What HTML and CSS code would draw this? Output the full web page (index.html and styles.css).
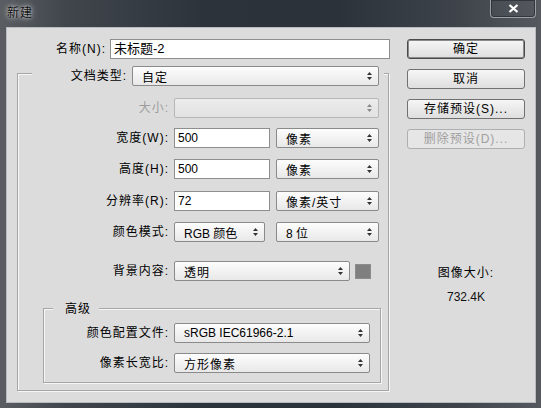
FILE: index.html
```html
<!DOCTYPE html>
<html lang="zh-CN">
<head>
<meta charset="utf-8">
<title>新建</title>
<link rel="stylesheet" href="styles.css">
</head>
<body>
<div class="window">
  <div class="titlebar">
    <span class="title">新建</span>
    <div class="close">
      <svg width="11" height="9" viewBox="0 0 11 9"><path d="M1.5 1 L9.5 8 M9.5 1 L1.5 8" stroke="#fff" stroke-width="2.2" fill="none"/></svg>
    </div>
  </div>
  <div class="content">
    <div class="left">
      <div class="row">
        <span class="lbl name-lbl">名称(N):</span>
        <div class="input name-input">未标题-2</div>
      </div>
      <div class="group outer">
        <div class="group-head doc-head">
          <span class="lbl doc-lbl">文档类型:</span>
          <div class="select doc-select"><span class="cjk">自定</span><svg class="arr" width="7" height="10" viewBox="0 0 7 10"><path d="M1 4 L3.5 1 L6 4 Z M1 6 L3.5 9 L6 6 Z"/></svg></div>
        </div>
        <div class="row r-size">
          <span class="lbl l150 off">大小:</span>
          <div class="select disabled w205"><span></span><svg class="arr" width="7" height="10" viewBox="0 0 7 10"><path d="M1 4 L3.5 1 L6 4 Z M1 6 L3.5 9 L6 6 Z"/></svg></div>
        </div>
        <div class="row r-w">
          <span class="lbl l150">宽度(W):</span>
          <div class="input w96">500</div>
          <div class="select w103 ml6"><span class="cjk">像素</span><svg class="arr" width="7" height="10" viewBox="0 0 7 10"><path d="M1 4 L3.5 1 L6 4 Z M1 6 L3.5 9 L6 6 Z"/></svg></div>
        </div>
        <div class="row r-h">
          <span class="lbl l150">高度(H):</span>
          <div class="input w96">500</div>
          <div class="select w103 ml6"><span class="cjk">像素</span><svg class="arr" width="7" height="10" viewBox="0 0 7 10"><path d="M1 4 L3.5 1 L6 4 Z M1 6 L3.5 9 L6 6 Z"/></svg></div>
        </div>
        <div class="row r-r">
          <span class="lbl l150">分辨率(R):</span>
          <div class="input w96">72</div>
          <div class="select w103 ml6"><span class="cjk">像素/英寸</span><svg class="arr" width="7" height="10" viewBox="0 0 7 10"><path d="M1 4 L3.5 1 L6 4 Z M1 6 L3.5 9 L6 6 Z"/></svg></div>
        </div>
        <div class="row r-c">
          <span class="lbl l150">颜色模式:</span>
          <div class="select w91"><span>RGB 颜色</span><svg class="arr" width="7" height="10" viewBox="0 0 7 10"><path d="M1 4 L3.5 1 L6 4 Z M1 6 L3.5 9 L6 6 Z"/></svg></div>
          <div class="select w103 ml11"><span>8 位</span><svg class="arr" width="7" height="10" viewBox="0 0 7 10"><path d="M1 4 L3.5 1 L6 4 Z M1 6 L3.5 9 L6 6 Z"/></svg></div>
        </div>
        <div class="row r-bg">
          <span class="lbl l150">背景内容:</span>
          <div class="select w176"><span class="cjk">透明</span><svg class="arr" width="7" height="10" viewBox="0 0 7 10"><path d="M1 4 L3.5 1 L6 4 Z M1 6 L3.5 9 L6 6 Z"/></svg></div>
          <div class="swatch"></div>
        </div>
        <div class="group inner">
          <div class="inner-head">高级</div>
          <div class="row r-p">
            <span class="lbl l124">颜色配置文件:</span>
            <div class="select w196"><span>sRGB IEC61966-2.1</span><svg class="arr" width="7" height="10" viewBox="0 0 7 10"><path d="M1 4 L3.5 1 L6 4 Z M1 6 L3.5 9 L6 6 Z"/></svg></div>
          </div>
          <div class="row r-a">
            <span class="lbl l124">像素长宽比:</span>
            <div class="select w196"><span class="cjk">方形像素</span><svg class="arr" width="7" height="10" viewBox="0 0 7 10"><path d="M1 4 L3.5 1 L6 4 Z M1 6 L3.5 9 L6 6 Z"/></svg></div>
          </div>
        </div>
      </div>
    </div>
    <div class="right">
      <div class="btn default">确定</div>
      <div class="btn">取消</div>
      <div class="btn">存储预设(S)...</div>
      <div class="btn disabled">删除预设(D)...</div>
      <div class="info">图像大小:</div>
      <div class="info2">732.4K</div>
    </div>
  </div>
</div>
</body>
</html>
```
FILE: styles.css
```css
body {
  margin: 0;
  background: #2e3338;
  font-family: "Liberation Sans", "Noto Sans CJK SC", sans-serif;
  font-size: 12px;
  color: #000;
}
.window {
  width: 541px;
  height: 408px;
  display: flex;
  flex-direction: column;
  background: linear-gradient(90deg, #5a5e63 0%, #41464c 12%, #2c333b 38%, #2b323a 62%, #3f444b 85%, #55595f 100%);
}
.titlebar {
  height: 27px;
  display: flex;
  justify-content: space-between;
  align-items: flex-start;
  flex-shrink: 0;
}
.title {
  margin: 6px 0 0 7px;
  line-height: 14px;
  font-size: 12px;
  letter-spacing: 1px;
  color: #111;
  text-shadow: 0 0 6px rgba(255,255,255,0.8), 0 0 3px rgba(255,255,255,0.6);
}
.close {
  width: 46px;
  height: 18px;
  box-sizing: border-box;
  margin-right: 5px;
  border: 1px solid #9aa0a6;
  border-top: none;
  border-radius: 0 0 4px 4px;
  box-shadow: inset 0 0 0 1px #30363c;
  display: flex;
  align-items: center;
  justify-content: center;
}
.content {
  flex: 1;
  margin: 0 5px 5px 6px;
  background: #dcdcdc;
  border: 1px solid #b8bcc0;
  box-sizing: border-box;
  display: flex;
  padding-top: 11px;
}
.left {
  width: 383px;
  padding-left: 10px;
  box-sizing: border-box;
}
.right {
  width: 118px;
  margin-left: 17px;
  display: flex;
  flex-direction: column;
}
.row {
  display: flex;
  align-items: center;
  height: 20px;
}
.lbl {
  text-align: right;
  line-height: 20px;
  white-space: nowrap;
  letter-spacing: 1px;
}
.off { color: #9c9c9c; }
.name-lbl { width: 89px; margin-right: 4px; }
.input {
  background: #fff;
  border: 1px solid #8e8e8e;
  height: 20px;
  box-sizing: border-box;
  line-height: 18px;
  padding-left: 3px;
}
.name-input { width: 280px; font-size: 13px; }
.group {
  border: 1px solid #a6a6a6;
  box-shadow: inset 1px 1px 0 #f6f6f6, 1px 1px 0 #f6f6f6;
  box-sizing: border-box;
}
.outer { margin-top: 14px; width: 372px; }
.group-head {
  display: flex;
  align-items: center;
  background: #dcdcdc;
}
.doc-head { margin: -8px 4px 0 14px; height: 20px; }
.doc-lbl { width: 95px; margin-right: 5px; }
.select {
  height: 20px;
  box-sizing: border-box;
  border: 1px solid #8a8a8a;
  border-radius: 2px;
  background: linear-gradient(#fdfdfd, #e8e8e8);
  display: flex;
  align-items: center;
  justify-content: space-between;
  padding: 0 5px 0 9px;
  white-space: nowrap;
}
.cjk { letter-spacing: 1px; }
.select.disabled {
  border-color: #b6b6b6;
  background: linear-gradient(#ececec, #e2e2e2);
}
.select.disabled .arr { fill: #8a8a8a; }
.arr { fill: #333; flex-shrink: 0; }
.doc-select { width: 247px; }
.l150 { width: 151px; margin-right: 5px; }
.l124 { width: 125px; margin-right: 5px; }
.w205 { width: 205px; }
.w96 { width: 96px; }
.w103 { width: 103px; }
.w91 { width: 91px; }
.w176 { width: 176px; }
.w196 { width: 196px; }
.ml6 { margin-left: 6px; }
.ml11 { margin-left: 11px; }
.r-size { margin-top: 12px; }
.r-w { margin-top: 10px; }
.r-h { margin-top: 11px; }
.r-r { margin-top: 12px; }
.r-c { margin-top: 11px; }
.r-bg { margin-top: 19px; }
.swatch {
  width: 16px;
  height: 15px;
  box-sizing: border-box;
  margin-left: 5px;
  background: #7f7f7f;
  border: 1px solid #8c8c8c;
}
.inner {
  margin: 27px 7px 7px 25px;
  padding-bottom: 9px;
}
.inner-head {
  width: fit-content;
  margin: -8px 0 0 9px;
  padding: 0 8px 0 12px;
  height: 16px;
  line-height: 16px;
  letter-spacing: 1px;
  background: #dcdcdc;
}
.r-p { margin-top: 6px; }
.r-a { margin-top: 10px; }
.btn {
  height: 20px;
  box-sizing: border-box;
  border: 1px solid #707070;
  border-radius: 3px;
  background: linear-gradient(#f6f6f6, #dedede);
  text-align: center;
  line-height: 18px;
  letter-spacing: 1px;
  margin-bottom: 10px;
}
.btn.default {
  border-color: #4a4a4a;
  box-shadow: inset 0 0 0 1px #8a8a8a;
}
.btn.disabled {
  border-color: #adb0b3;
  color: #a0a0a0;
  background: #e6e6e6;
}
.info {
  margin-top: 106px;
  line-height: 16px;
  text-align: center;
  letter-spacing: 1px;
}
.info2 {
  margin-top: 8px;
  line-height: 16px;
  text-align: center;
  color: #111;
}
```
